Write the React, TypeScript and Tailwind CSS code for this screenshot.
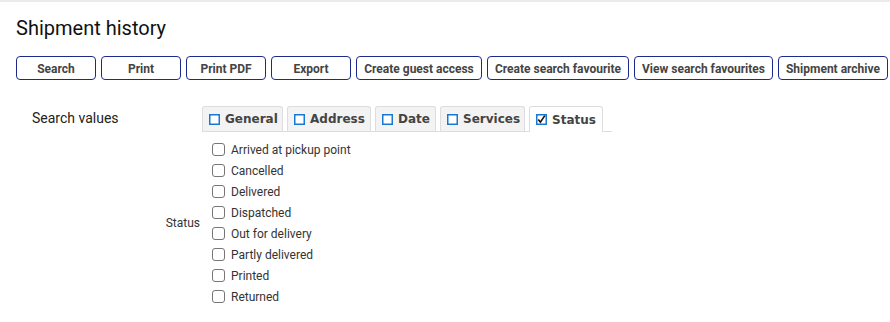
import React from "react";

const buttons = [
	{ label: "Search", w: "w-[80px]" },
	{ label: "Print", w: "w-[80px]" },
	{ label: "Print PDF", w: "w-[80px]" },
	{ label: "Export", w: "w-[80px]" },
	{ label: "Create guest access", w: "w-[126px]" },
	{ label: "Create search favourite", w: "w-[142px]" },
	{ label: "View search favourites", w: "w-[139px]" },
	{ label: "Shipment archive", w: "w-[110px]" },
];

const tabs = [
	{ label: "General", w: "w-[81px]", active: false },
	{ label: "Address", w: "w-[84px]", active: false },
	{ label: "Date", w: "w-[61px]", active: false },
	{ label: "Services", w: "w-[85px]", active: false },
	{ label: "Status", w: "w-[74px]", active: true },
];

const statuses = [
	"Arrived at pickup point",
	"Cancelled",
	"Delivered",
	"Dispatched",
	"Out for delivery",
	"Partly delivered",
	"Printed",
	"Returned",
];

const TabBox = ({ checked }: { checked: boolean }) => (
	<svg width="11" height="11" viewBox="0 0 11 11" className="shrink-0">
		<rect x="0.75" y="0.75" width="9.5" height="9.5" fill="white" stroke="#1a78d0" strokeWidth="1.5" />
		{checked && (
			<path d="M2.3 5.6 L4.4 8.2 L8.8 1.6" fill="none" stroke="#111" strokeWidth="1.6" />
		)}
	</svg>
);

const App = () => {
	return (
		<div className="w-[890px] h-[322px] bg-white font-['Roboto',sans-serif] text-[#222]">
			<div className="h-[2px] bg-[#ebebeb]" />
			<div className="px-4">
				<h1 className="mt-[14px] text-[20px] leading-[24px] text-[#111]">Shipment history</h1>
				<div className="mt-[16px] flex gap-[5px]">
					{buttons.map((b) => (
						<button
							key={b.label}
							className={`${b.w} h-[24px] shrink-0 rounded-[4px] border border-[#1c2a8c] bg-white pt-px text-[12px] font-bold text-[#444] leading-none`}
						>
							{b.label}
						</button>
					))}
				</div>
			</div>

			<div className="mt-[26px] pl-[32px]">
				<div className="flex">
					<div className="w-[170px] pt-[3px] text-[14px] leading-[18px] text-[#222]">Search values</div>
					<div className="flex w-[410px] gap-[4px] border-b border-[#dddddd] font-['DejaVu_Sans',sans-serif]">
						{tabs.map((t) => (
							<div
								key={t.label}
								className={`${t.w} h-[25px] flex items-center gap-[5px] pl-[6px] rounded-t-[3px] border border-b-0 border-[#dddddd] text-[12px] font-bold text-[#444] ${
									t.active ? "bg-white -mb-px h-[26px]" : "bg-[#f3f3f3]"
								}`}
							>
								<TabBox checked={t.active} />
								<span>{t.label}</span>
							</div>
						))}
					</div>
				</div>

				<div className="mt-[7px] flex items-center">
					<div className="w-[168px] text-right text-[12px] text-[#333]">Status</div>
					<div className="ml-[12px] flex flex-col">
						{statuses.map((s) => (
							<label key={s} className="flex h-[21px] items-center gap-[6px] text-[12px] text-[#333]">
								<span className="h-[13px] w-[13px] rounded-[3px] border border-[#767676] bg-white" />
								{s}
							</label>
						))}
					</div>
				</div>
			</div>
		</div>
	);
};

export default App;
